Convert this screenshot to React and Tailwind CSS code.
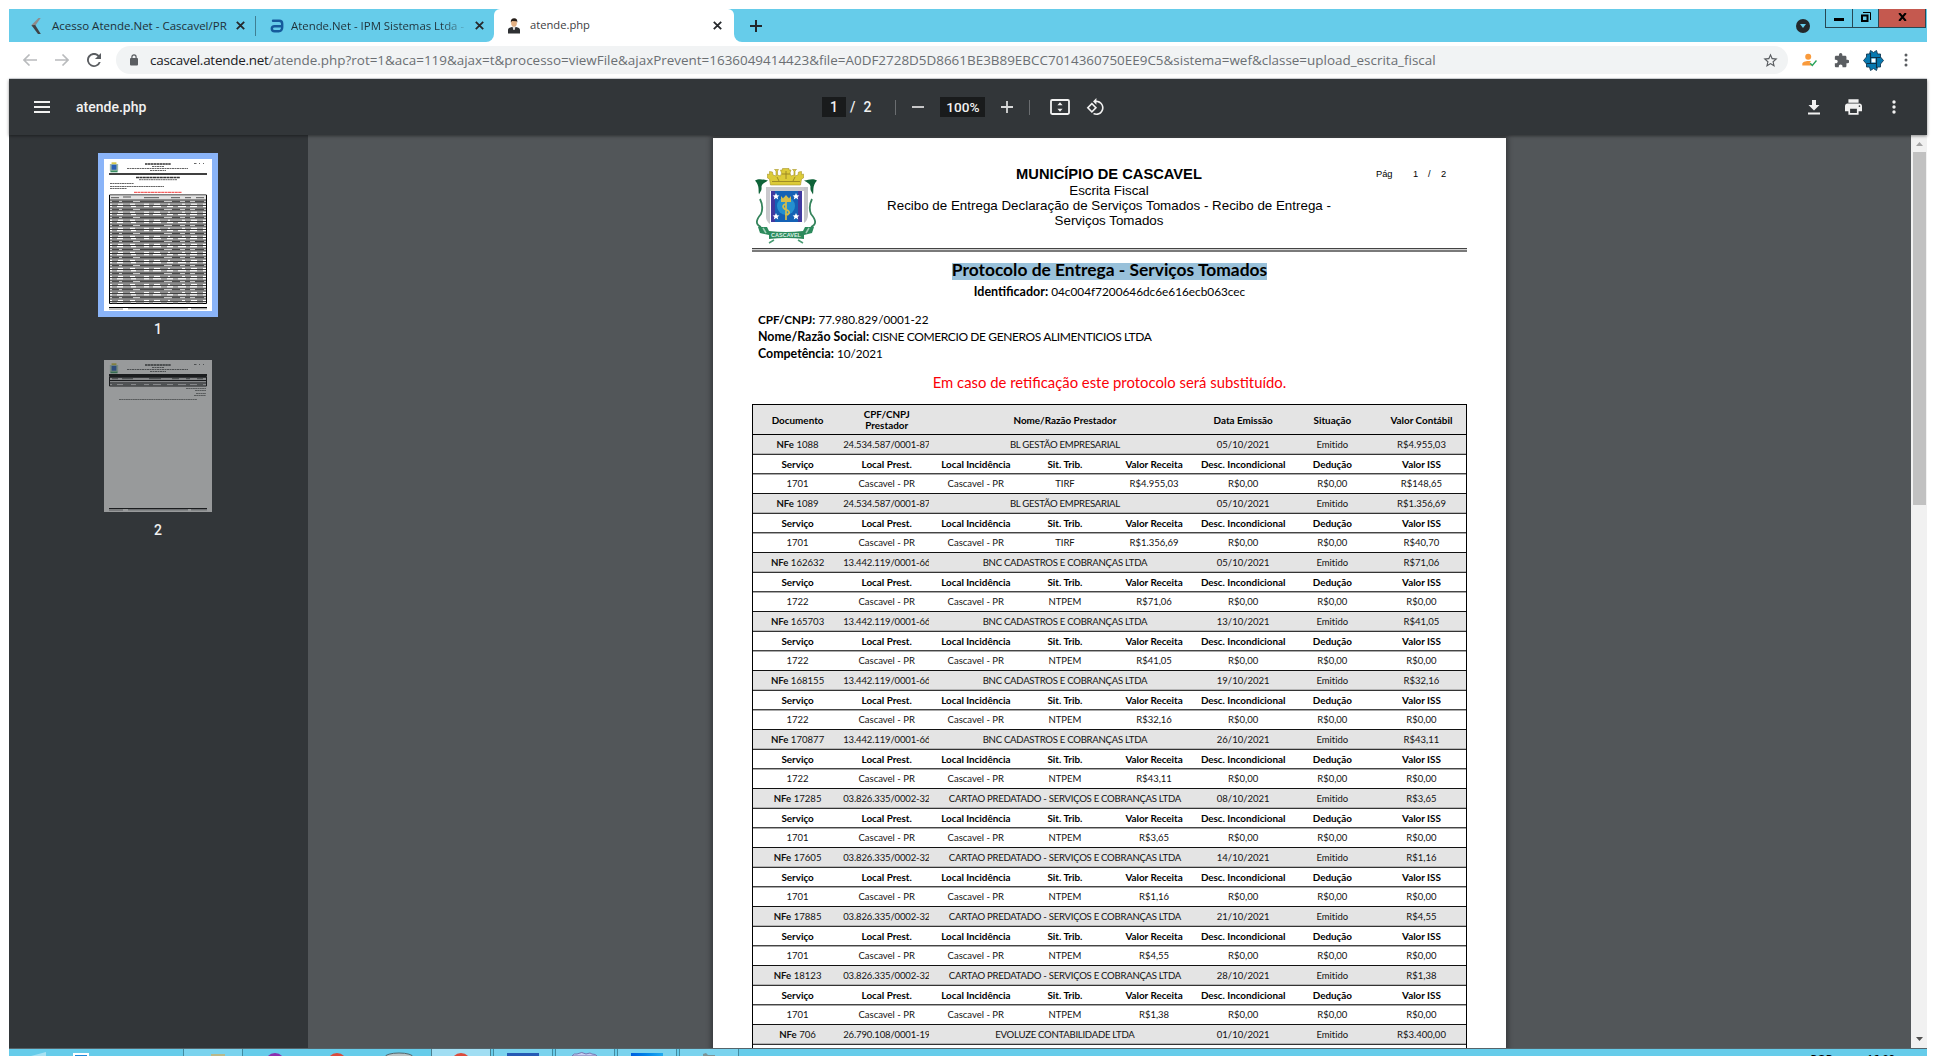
import React from 'react';

const RECORDS = [
  { nfe: '1088', cnpj: '24.534.587/0001-87', name: 'BL GESTÃO EMPRESARIAL', date: '05/10/2021', total: 'R$4.955,03', service: '1701', trib: 'TIRF', receita: 'R$4.955,03', iss: 'R$148,65' },
  { nfe: '1089', cnpj: '24.534.587/0001-87', name: 'BL GESTÃO EMPRESARIAL', date: '05/10/2021', total: 'R$1.356,69', service: '1701', trib: 'TIRF', receita: 'R$1.356,69', iss: 'R$40,70' },
  { nfe: '162632', cnpj: '13.442.119/0001-66', name: 'BNC CADASTROS E COBRANÇAS LTDA', date: '05/10/2021', total: 'R$71,06', service: '1722', trib: 'NTPEM', receita: 'R$71,06', iss: 'R$0,00' },
  { nfe: '165703', cnpj: '13.442.119/0001-66', name: 'BNC CADASTROS E COBRANÇAS LTDA', date: '13/10/2021', total: 'R$41,05', service: '1722', trib: 'NTPEM', receita: 'R$41,05', iss: 'R$0,00' },
  { nfe: '168155', cnpj: '13.442.119/0001-66', name: 'BNC CADASTROS E COBRANÇAS LTDA', date: '19/10/2021', total: 'R$32,16', service: '1722', trib: 'NTPEM', receita: 'R$32,16', iss: 'R$0,00' },
  { nfe: '170877', cnpj: '13.442.119/0001-66', name: 'BNC CADASTROS E COBRANÇAS LTDA', date: '26/10/2021', total: 'R$43,11', service: '1722', trib: 'NTPEM', receita: 'R$43,11', iss: 'R$0,00' },
  { nfe: '17285', cnpj: '03.826.335/0002-32', name: 'CARTAO PREDATADO - SERVIÇOS E COBRANÇAS LTDA', date: '08/10/2021', total: 'R$3,65', service: '1701', trib: 'NTPEM', receita: 'R$3,65', iss: 'R$0,00' },
  { nfe: '17605', cnpj: '03.826.335/0002-32', name: 'CARTAO PREDATADO - SERVIÇOS E COBRANÇAS LTDA', date: '14/10/2021', total: 'R$1,16', service: '1701', trib: 'NTPEM', receita: 'R$1,16', iss: 'R$0,00' },
  { nfe: '17885', cnpj: '03.826.335/0002-32', name: 'CARTAO PREDATADO - SERVIÇOS E COBRANÇAS LTDA', date: '21/10/2021', total: 'R$4,55', service: '1701', trib: 'NTPEM', receita: 'R$4,55', iss: 'R$0,00' },
  { nfe: '18123', cnpj: '03.826.335/0002-32', name: 'CARTAO PREDATADO - SERVIÇOS E COBRANÇAS LTDA', date: '28/10/2021', total: 'R$1,38', service: '1701', trib: 'NTPEM', receita: 'R$1,38', iss: 'R$0,00' },
  { nfe: '706', cnpj: '26.790.108/0001-19', name: 'EVOLUZE CONTABILIDADE LTDA', date: '01/10/2021', total: 'R$3.400,00' },
];

const SUB_HEADERS = ['Serviço', 'Local Prest.', 'Local Incidência', 'Sit. Trib.', 'Valor Receita', 'Desc. Incondicional', 'Dedução', 'Valor ISS'];

const CloseX = ({ className }) => (
  <svg viewBox="0 0 9 9" className={`h-[9px] w-[9px] shrink-0 ${className || ''}`} stroke="#26292c" strokeWidth="1.8"><path d="M.8.8l7.4 7.4M8.2.8L.8 8.2" /></svg>
);

function TabStrip() {
  return (
    <div className="flex h-[33px] shrink-0">
      <div className="flex w-[485px] items-center rounded-br-[8px] bg-[#66ccea] text-[#1f3038]">
        <svg viewBox="0 0 10 16" className="ml-[22px] h-4 w-[10px] shrink-0">
          <path d="M7.5 0h2.2L4 8 1 8.6.5 7z" fill="#8e8b8b" />
          <path d="M.5 7.2L4.2 7l5.6 9H7z" fill="#3f4347" />
        </svg>
        <span className="ml-[11px] w-[175px] shrink-0 whitespace-nowrap text-[11.5px]">Acesso Atende.Net - Cascavel/PR</span>
        <CloseX className="ml-[9px]" />
        <span className="ml-[10px] h-5 w-px shrink-0 bg-[#3f7f93]" />
        <svg viewBox="0 0 14 14" className="ml-[14px] h-[14px] w-[14px] shrink-0" fill="none" stroke="#165a9c" strokeWidth="2.4" strokeLinecap="round">
          <path d="M3 1.8h6.2c2 0 3 1 3 3v3.4c0 2.600-1.300 4-3.500 4H4.600c-1.700 0-2.800-.8-2.800-2.400S3 7.300 4.600 7.300H12" />
        </svg>
        <span className="ml-[7px] w-[175px] shrink-0 whitespace-nowrap bg-gradient-to-r from-[#1f3038] from-85% to-[#5fb9d4] bg-clip-text text-[11.4px] text-transparent">Atende.Net - IPM Sistemas Ltda -</span>
        <CloseX className="ml-[9px]" />
      </div>
      <div className="flex w-[240px] bg-[linear-gradient(#66ccea_8px,#ffffff_8px)]">
        <div className="flex w-full items-center rounded-t-[6px] bg-white">
          <svg viewBox="0 0 14 16" className="ml-[13px] h-4 w-[14px]">
            <path d="M1 15.500V12c0-1.600 1.500-2.500 4-3h4c2.500.5 4 1.400 4 3v3.500z" fill="#2e3033" />
            <path d="M5.200 8h3.600L7.600 12H6.400z" fill="#dedede" />
            <ellipse cx="7" cy="5" rx="2.900" ry="3.700" fill="#e2b083" />
            <path d="M3.800 4.500C3.600 1.500 5 .2 7.200.2s3.400 1.500 3.100 4.300L9.500 3.200 5 3z" fill="#261e19" />
          </svg>
          <span className="ml-[9px] flex-1 text-[11.200px] text-[#3c4043]">atende.php</span>
          <CloseX className="mr-[12px]" />
        </div>
      </div>
      <div className="flex flex-1 items-center rounded-bl-[8px] bg-[#66ccea]">
        <svg viewBox="0 0 12 12" className="ml-4 h-3 w-3" stroke="#22262a" strokeWidth="2"><path d="M6 0v12M0 6h12" /></svg>
        <svg viewBox="0 0 14 14" className="ml-auto h-[14px] w-[14px]"><circle cx="7" cy="7" r="7" fill="#23282b" /><path d="M4 5h6l-3 4z" fill="#66ccea" /></svg>
        <div className="ml-[15px] mr-px flex h-[19px] self-start border border-t-0 border-[#274753]">
          <div className="flex w-[27px] justify-center border-r border-[#274753] pt-[9px]"><span className="h-[3px] w-[10px] bg-black" /></div>
          <div className="flex w-[26px] justify-center border-r border-[#274753] pt-[3px]">
            <svg viewBox="0 0 10 10" className="h-[10px] w-[10px]" fill="none" stroke="#000"><path d="M1 3.500h5.500V9H1z" strokeWidth="2" /><path d="M2 .5h7.500V8" /></svg>
          </div>
          <div className="flex w-[46px] justify-center bg-[#c5594f] pt-1">
            <svg viewBox="0 0 9 8" className="h-2 w-[9px]" stroke="#000" strokeWidth="2"><path d="M1.200 0l6.600 8M7.800 0L1.200 8" /></svg>
          </div>
        </div>
      </div>
    </div>
  );
}

function AddressBar() {
  return (
    <div className="flex h-[37px] shrink-0 items-center border-b border-[#dadce0] bg-white pb-0">
      <svg viewBox="0 0 14 12" className="ml-[14px] h-3 w-[14px]" fill="none" stroke="#b9bbbd" strokeWidth="1.600"><path d="M14 6H1M6.500.5L1 6l5.500 5.500" /></svg>
      <svg viewBox="0 0 14 12" className="ml-[18px] h-3 w-[14px]" fill="none" stroke="#b9bbbd" strokeWidth="1.600"><path d="M0 6h13M7.500.5L13 6l-5.500 5.500" /></svg>
      <svg viewBox="0 0 14 14" className="ml-[18px] h-[14px] w-[14px]"><path d="M12 2A7 7 0 1 0 13.700 9H11.800A5.150 5.150 0 1 1 10.600 3.400L7.900 6.100H14V0z" fill="#5a5d61" /></svg>
      <div className="ml-[15px] flex h-7 w-[1672px] items-center rounded-full bg-[#f1f3f4]">
        <svg viewBox="0 0 8 12" className="ml-[14px] h-3 w-2"><rect y="4" width="8" height="7.500" rx="1" fill="#5a5d61" /><path d="M1.900 4.500V3a2.100 2.100 0 0 1 4.200 0v1.500" fill="none" stroke="#5a5d61" strokeWidth="1.200" /></svg>
        <span className="ml-[12px] flex-1 whitespace-nowrap text-[13.440px] text-[#6b6f73]"><span className="tracking-[-0.250px] text-[#202124]">cascavel.atende.net</span>/atende.php?rot=1&amp;aca=119&amp;ajax=t&amp;processo=viewFile&amp;ajaxPrevent=1636049414423&amp;file=A0DF2728D5D8661BE3B89EBCC7014360750EE9C5&amp;sistema=wef&amp;classe=upload_escrita_fiscal</span>
        <svg viewBox="0 0 24 24" className="mr-[9px] h-[17px] w-[17px]"><path fill="#5a5d61" d="M22 9.240l-7.190-.62L12 2 9.190 8.630 2 9.240l5.460 4.730L5.820 21 12 17.270 18.180 21l-1.630-7.030zM12 15.400l-3.760 2.270 1-4.280-3.320-2.880 4.380-.38L12 6.100l1.710 4.040 4.380.38-3.320 2.880 1 4.280z" /></svg>
      </div>
      <svg viewBox="0 0 15 14" className="ml-[14px] h-[14px] w-[15px]"><circle cx="6.200" cy="3.800" r="3" fill="#f99a3c" /><path d="M.3 12.500V11c0-2 3-3 6-3 1.200 0 2 .1 2.800.4L7.600 10l2 2.500z" fill="#f99a3c" /><path d="M8.200 10.300l2.100 2.200 4.200-5" fill="none" stroke="#27a35a" strokeWidth="1.400" /></svg>
      <svg viewBox="1 1 21.500 22" className="ml-[17px] h-[15px] w-[15px]"><path fill="#5a5d61" d="M20.500 11H19V7c0-1.100-.9-2-2-2h-4V3.500a2.500 2.500 0 0 0-5 0V5H4c-1.100 0-1.990.9-1.990 2v3.800H3.500c1.490 0 2.700 1.210 2.700 2.700s-1.210 2.700-2.700 2.700H2V20c0 1.100.9 2 2 2h3.800v-1.500c0-1.490 1.210-2.700 2.700-2.700s2.700 1.210 2.700 2.700V22H17c1.100 0 2-.9 2-2v-4h1.500a2.500 2.500 0 0 0 0-5z" /></svg>
      <svg viewBox="0 0 21 21" className="ml-[14px] h-[21px] w-[21px]">
        <path d="M7.500.5l3 2 3-2 1 3.500h3v3l3 3.500-3 3.500v3h-3l-1 3.500-3-2-3 2-1-3.500h-3v-3l-3-3.500 3-3.500V4h3z" fill="#0779b0" stroke="#123a55" strokeWidth=".9" />
        <path d="M7.500 3v10.500M3.500 13.500h9.500M13.500 18V7.500M17.500 7.500H8" fill="none" stroke="#0d3047" strokeWidth="1.100" />
        <path d="M8.500 8.500h4v4h-4z" fill="#fff" />
      </svg>
      <svg viewBox="0 0 4 14" className="ml-[20px] h-[14px] w-1" fill="#5a5d61"><circle cx="2" cy="2" r="1.500" /><circle cx="2" cy="7" r="1.500" /><circle cx="2" cy="12" r="1.500" /></svg>
    </div>
  );
}

function PdfToolbar() {
  return (
    <div className="relative z-10 flex h-14 shrink-0 items-center bg-[#323639] font-['Roboto'] text-[14px] font-medium text-[#f1f1f1] shadow-[0_1px_3px_rgba(0,0,0,0.45)]">
      <svg viewBox="0 0 16 12" className="ml-[25px] h-3 w-4" fill="#f1f1f1"><path d="M0 0h16v2H0zM0 5h16v2H0zM0 10h16v2H0z" /></svg>
      <span className="ml-[26px] w-[746px]">atende.php</span>
      <span className="flex h-5 w-6 items-center justify-center bg-[#191b1c]">1</span>
      <span className="ml-[4px]">/</span>
      <span className="ml-[8px]">2</span>
      <span className="ml-[24px] h-[15px] w-px bg-[#6a6d70]" />
      <svg viewBox="0 0 12 12" className="ml-[16px] h-3 w-3" stroke="#d8d9d9" strokeWidth="1.800"><path d="M0 6h12" /></svg>
      <span className="ml-[16px] flex h-5 w-[45px] items-center justify-center bg-[#191b1c] text-[13.6px]">100%</span>
      <svg viewBox="0 0 12 12" className="ml-[16px] h-3 w-3" stroke="#d8d9d9" strokeWidth="1.800"><path d="M0 6h12M6 0v12" /></svg>
      <span className="ml-[16px] h-[15px] w-px bg-[#6a6d70]" />
      <svg viewBox="0 0 20 16" className="ml-[20px] h-4 w-5"><rect x="1" y="1" width="18" height="14" rx="1.200" fill="none" stroke="#f1f1f1" strokeWidth="1.800" /><path d="M10 3.300l2.600 3H7.400zM10 12.700l2.600-3H7.400z" fill="#f1f1f1" /></svg>
      <svg viewBox="0 1 22.500 22" className="ml-[16px] h-[18px] w-[18px]"><path fill="#f1f1f1" d="M7.340 6.410L.86 12.900l6.490 6.480 6.490-6.480-6.500-6.490zM3.690 12.900l3.660-3.660L11 12.900l-3.660 3.660-3.650-3.660zm15.670-6.260C17.610 4.880 15.300 4 13 4V.76L8.760 5 13 9.240V6c1.790 0 3.580.68 4.950 2.050 2.730 2.730 2.730 7.170 0 9.900C16.580 19.320 14.790 20 13 20c-.97 0-1.940-.21-2.840-.61l-1.490 1.490C10.020 21.620 11.510 22 13 22c2.300 0 4.610-.88 6.360-2.640 3.520-3.510 3.520-9.210 0-12.720z" /></svg>
      <svg viewBox="0 0 14 17" className="ml-auto h-[17px] w-[14px]" fill="#f1f1f1"><path d="M5 1h4v5h3.500L7 11.500 1.500 6H5zM1 13.500h12v2H1z" /></svg>
      <svg viewBox="2 3 20 18" className="ml-[24px] h-4 w-[17px]"><path fill="#f1f1f1" d="M19 8H5c-1.660 0-3 1.340-3 3v6h4v4h12v-4h4v-6c0-1.660-1.340-3-3-3zm-3 11H8v-5h8v5zm3-7c-.55 0-1-.45-1-1s.45-1 1-1 1 .45 1 1-.45 1-1 1zm-1-9H6v4h12V3z" /></svg>
      <svg viewBox="0 0 4 14" className="ml-[30px] mr-[31px] h-[14px] w-1" fill="#f1f1f1"><circle cx="2" cy="2" r="1.700" /><circle cx="2" cy="7" r="1.700" /><circle cx="2" cy="12" r="1.700" /></svg>
    </div>
  );
}

function Crest({ className }) {
  return (
    <svg viewBox="0 0 62 77" className={className}>
      <path d="M15.500 17l-1-6-2-1V6l2 .5V3.500l3 .5.500 3 3 1V3l-1.500-1.500h4L22.500 3v4l3 1 1-3-1-3h2V.5h6.500V2h2l-1 3 1 3 3-1V3L37.500 1.500h4L40 3v5l3-1 .5-3 3-.5V6.500l2-.5v4l-2 1-1 6z" fill="#dccb38" stroke="#a8952a" strokeWidth=".6" />
      <path d="M17 13.500h28M22 9l2 4M40 9l-2 4M31 3v8M27 6h8" fill="none" stroke="#978522" strokeWidth=".9" />
      <path d="M0 12.500c4-2.500 8-1 13 0-3 2-6 3-6.500 6 .5 5-1.500 5-2.500 8-1-5 1-8-4-14zM62 12.500c-4-2.500-8-1-13 0 3 2 6 3 6.500 6-.5 5 1.500 5 2.500 8 1-5-1-8 4-14z" fill="#0f6339" />
      <path d="M5 31c3 6 3 10 1 15-5 6-6 10 0 13M57 31c-3 6-3 10-1 15 5 6 6 10 0 13" fill="none" stroke="#35845c" strokeWidth="1.800" />
      <path d="M11 19h42v32q-3 6-9 6H20q-9 0-9-6z" fill="#fff" />
      <path d="M11 19h42v4H11zM11 19h4v37q-4-3-4-7z" fill="#c9c9cd" />
      <path d="M53 19h-4v36q4-3 4-8z" fill="#c3c3c8" />
      <path d="M16 23h31v31H16z" fill="#41399f" />
      <path d="M20 23h23v31H20z" fill="#1461b5" />
      <circle cx="31" cy="38" r="9" fill="#2490cf" />
      <path d="M26 28l2 2.500 3-3.500 3 3.500 2-2.500v6H26z" fill="#d7bd49" />
      <path d="M31 36c-5 1-3 5 1 6 4 2 2 5-2 5M31 33v19" fill="none" stroke="#d7bd49" strokeWidth="1.700" />
      <path fill="#fff" d="M21 25l1 2.200 2.400.2-1.800 1.600.6 2.400-2.200-1.300-2.200 1.300.6-2.400-1.800-1.600 2.400-.2zM41 25l1 2.200 2.400.2-1.800 1.600.6 2.400-2.200-1.300-2.200 1.300.6-2.400-1.800-1.600 2.400-.2zM21 45l1 2.200 2.400.2-1.800 1.600.6 2.400-2.200-1.300-2.200 1.300.6-2.400-1.800-1.600 2.400-.2zM41 45l1 2.200 2.400.2-1.800 1.600.6 2.400-2.200-1.300-2.200 1.300.6-2.400-1.800-1.600 2.400-.2z" />
      <path d="M3 59l9 0 2 4q17 2 34 0l2-4 9 0-2 6-8 2v4q-18-2-35 0v-4l-9-2z" fill="#2c8a5c" />
      <path d="M8 60l3 5M54 60l-3 5" stroke="#9fcdb5" strokeWidth="1.500" />
      <path d="M14 75l5-3M48 75l-5-3" stroke="#4b9d75" strokeWidth="1.500" />
      <text x="31" y="69" textAnchor="middle" fontSize="5.500" fontWeight="700" fill="#dff1e7" fontFamily="Liberation Sans">CASCAVEL</text>
    </svg>
  );
}

const thumbRows = Array.from({ length: 13 }, (_, i) => 41 + i * 8.020);

function FirstPageArt() {
  return (
    <svg viewBox="0 0 108 152" className="h-[152px] w-[108px] bg-white">
      <svg x="5" y="3" width="10" height="11" viewBox="0 0 62 77"><path d="M14 2h34v14H14z" fill="#d6c84a" /><path d="M2 14h58v48H2z" fill="#9db8a9" /><path d="M14 20h34v34H14z" fill="#2a5fb5" /><path d="M6 60h50v12H6z" fill="#3a8e64" /></svg>
      <g stroke="#333" fill="none">
        <path d="M41 5h26" strokeWidth="1.600" strokeDasharray="2.500 .4" />
        <path d="M48 7.500h12M23 9.500h61M46 11.500h16M90 4.500h3M95 4.500h1M99 4.500h1" strokeWidth="1" strokeDasharray="2 .5" opacity=".75" />
        <path d="M32 18.500h44" strokeWidth="1.700" strokeDasharray="3 .4" />
        <path d="M35 20.700h38M6 24.500h24M6 27.500h54M6 29.500h17" strokeWidth="1" strokeDasharray="2 .4" opacity=".75" />
      </g>
      <path d="M5 15h98" stroke="#000" strokeWidth="1.400" />
      <path d="M30 33.300h48" stroke="#f23838" strokeWidth="1" strokeDasharray="3 .4" />
      <path d="M5.500 36h97v108.500h-97z" fill="#fff" stroke="#000" strokeWidth="1" />
      <path d="M6 36.500h96v4H6z" fill="#e2e2e2" />
      <path d="M7 38.700h8M19 38h8M40 38.700h15M67 38.700h9M81 38.700h6M92 38.700h8" stroke="#555" />
      {thumbRows.map((y) => (
        <g key={y}>
          <path d={`M6 ${y + 1.3}h96`} stroke="#c9c9c9" strokeWidth="2" />
          <path d={`M8 ${y + 1.400}h7M18 ${y + 1.400}h11M36 ${y + 1.400}h24M68 ${y + 1.400}h8M81 ${y + 1.400}h5M91 ${y + 1.400}h9`} stroke="#333" strokeWidth=".9" />
          <path d={`M6 ${y}h96M6 ${y + 2.800}h96M6 ${y + 5.400}h96`} stroke="#111" strokeWidth=".9" />
          <path d={`M8 ${y + 4.100}h6M19 ${y + 4.100}h7M31 ${y + 4.100}h9M45 ${y + 4.100}h5M56 ${y + 4.100}h8M66 ${y + 4.100}h12M81 ${y + 4.100}h6M93 ${y + 4.100}h6M8 ${y + 6.700}h5M19 ${y + 6.700}h8M32 ${y + 6.700}h8M45 ${y + 6.700}h4M57 ${y + 6.700}h6M69 ${y + 6.700}h5M82 ${y + 6.700}h4M93 ${y + 6.700}h6`} stroke="#555" strokeWidth=".8" />
        </g>
      ))}
      <path d="M5 148.500h98" stroke="#000" strokeWidth="1.200" />
      <path d="M5 150h14M24 149.800h60M87 149.800h16" stroke="#666" strokeWidth=".8" />
    </svg>
  );
}

function SecondPageArt() {
  return (
    <svg viewBox="0 0 108 152" className="h-[152px] w-[108px] bg-[#989a9b]">
      <svg x="5" y="3" width="10" height="11" viewBox="0 0 62 77"><path d="M14 2h34v14H14z" fill="#83803f" /><path d="M2 14h58v48H2z" fill="#758a80" /><path d="M14 20h34v34H14z" fill="#2d4c7c" /><path d="M6 60h50v12H6z" fill="#356a50" /></svg>
      <g stroke="#333739">
        <path d="M41 5h26" strokeWidth="1.600" strokeDasharray="2.500 .4" />
        <path d="M48 7.500h12M23 9.500h61M46 11.500h16M90 4.500h3M95 4.500h1M99 4.500h1" strokeWidth="1" strokeDasharray="2 .5" opacity=".75" />
      </g>
      <path d="M5 15h98" stroke="#1b1d1f" strokeWidth="2" />
      <path d="M5.500 16.500h97v9.500h-97z" fill="#86888a" stroke="#1b1d1f" />
      <path d="M6 17.200h96M6 20.500h96M6 23h96" stroke="#1b1d1f" strokeWidth="1.100" />
      <path d="M8 18.700h6M18 18.700h11M45 18.700h12M68 18.700h7M82 18.700h4M93 18.700h6M8 24.700h5M19 24.700h8M32 24.700h8M45 24.700h4M57 24.700h6M69 24.700h5M82 24.700h4M93 24.700h6" stroke="#3c3f41" strokeWidth=".9" />
      <path d="M82 28.500h20M91 30.500h11M92 33.500h10M90 35.500h12M15 39.500h78" stroke="#505355" strokeWidth=".9" strokeDasharray="2 .3" />
      <path d="M5 148.500h98" stroke="#1b1d1f" strokeWidth="1.200" />
      <path d="M5 150h14M24 149.800h60M87 149.800h16" stroke="#4a4d4f" strokeWidth=".8" />
    </svg>
  );
}

function Sidebar() {
  return (
    <div className="flex w-[299px] shrink-0 flex-col items-center bg-[#323639] pt-[18px] font-['Roboto'] text-[14px] font-medium leading-4 text-[#f1f1f1]">
      <div className="-ml-[1px] bg-[#8ab4f8] p-[6px]"><FirstPageArt /></div>
      <span className="-ml-px mt-[4px]">1</span>
      <div className="-ml-[1px] mt-[23px]"><SecondPageArt /></div>
      <span className="-ml-px mt-[10px]">2</span>
    </div>
  );
}

const Cell = ({ children, className }) => <div className={`overflow-hidden whitespace-nowrap text-center ${className || ''}`}>{children}</div>;

function RecordRows({ r }) {
  return (
    <>
      <div className="grid h-5 grid-cols-8 items-center border-b border-[#333] bg-[#e4e4e4] shadow-[inset_0_-1px_0_#b5b5b5]">
        <Cell className="text-[9.600px]"><b>NFe</b> {r.nfe}</Cell>
        <Cell className="ml-px mr-[2px] text-left text-[9.500px] tracking-[-0.130px]">{r.cnpj}</Cell>
        <Cell className="col-span-3 text-[9.600px] tracking-[-0.280px]">{r.name}</Cell>
        <Cell>{r.date}</Cell>
        <Cell>Emitido</Cell>
        <Cell>{r.total}</Cell>
      </div>
      {r.service && (
        <>
          <div className="grid h-[19px] grid-cols-8 items-center border-b border-[#444] text-[9.900px] font-bold text-black">
            {SUB_HEADERS.map((h) => <Cell key={h} className="-mt-px tracking-[-0.020px]">{h}</Cell>)}
          </div>
          <div className="grid h-5 grid-cols-8 items-center border-b border-[#111] shadow-[inset_0_1px_0_#aaa]">
            {[r.service, 'Cascavel - PR', 'Cascavel - PR', r.trib, r.receita, 'R$0,00', 'R$0,00', r.iss].map((v, i) => <Cell key={i}>{v}</Cell>)}
          </div>
        </>
      )}
    </>
  );
}

function DocumentPage() {
  return (
    <div className="mt-[3px] w-[793px] shrink-0 self-start bg-white px-[39px] font-['Lato'] text-black shadow-[0_0_5px_2px_rgba(0,0,0,0.35)]">
      <div className="flex h-[110px] font-['Liberation_Sans']">
        <Crest className="ml-[3px] mt-[30px] h-[77px] w-[62px] shrink-0" />
        <div className="ml-[57px] mt-[28px] w-[470px] text-center text-[13.360px] leading-[15px]">
          <div className="text-[14.700px] font-bold leading-[17px]">MUNICÍPIO DE CASCAVEL</div>
          <div>Escrita Fiscal</div>
          <div className="whitespace-nowrap">Recibo de Entrega Declaração de Serviços Tomados - Recibo de Entrega -</div>
          <div>Serviços Tomados</div>
        </div>
        <div className="ml-[32px] mt-[30px] flex h-3 text-[9.300px] leading-3">
          <span className="w-[37px]">Pág</span><span className="w-[15px]">1</span><span className="w-[13px]">/</span><span>2</span>
        </div>
      </div>
      <div className="h-1 border-b-2 border-t border-b-[#7a7a7a] border-t-[#444] bg-[#d0d0d0]" />
      <div className="mt-[11px] flex justify-center"><span className="h-[17px] whitespace-nowrap bg-[#99c1da] text-[17.400px] font-bold leading-[14.500px]">Protocolo de Entrega - Serviços Tomados</span></div>
      <div className="mt-[4px] text-center text-[11.800px] leading-4"><b className="text-[12.500px]">Identificador:</b> 04c004f7200646dc6e616ecb063cec</div>
      <div className="ml-[6px] mt-[11px] text-[11.700px] leading-[17px]">
        <div><b className="text-[11.700px]">CPF/CNPJ:</b> 77.980.829/0001-22</div>
        <div><b className="text-[12.400px]">Nome/Razão Social:</b> <span className="text-[12px] tracking-[-0.390px]">CISNE COMERCIO DE GENEROS ALIMENTICIOS LTDA</span></div>
        <div><b className="text-[12.400px]">Competência:</b> 10/2021</div>
      </div>
      <div className="mt-[10px] text-center text-[14.850px] leading-5 text-[#fb0007]">Em caso de retificação este protocolo será substituído.</div>
      <div className="mt-[12px] border border-b-0 border-black text-[9.500px] leading-[14px] text-[#111] [font-variant-ligatures:none]">
        <div className="grid h-[30px] grid-cols-8 items-center border-b border-black bg-[#e4e4e4] text-[9.900px] font-bold text-black">
          <Cell>Documento</Cell>
          <Cell className="leading-[11px]">CPF/CNPJ<br />Prestador</Cell>
          <Cell className="col-span-3">Nome/Razão Prestador</Cell>
          <Cell>Data Emissão</Cell>
          <Cell>Situação</Cell>
          <Cell>Valor Contábil</Cell>
        </div>
        {RECORDS.map((r) => <RecordRows key={r.nfe} r={r} />)}
        <div className="h-5" />
      </div>
    </div>
  );
}

function Taskbar() {
  return (
    <div className="flex h-2 shrink-0 items-stretch overflow-hidden border-t border-[#55646a] bg-[#66ccea]">
      <svg viewBox="0 0 15 7" className="ml-[22px] h-[7px] w-[15px]"><path d="M0 7l15-4v4z" fill="#a8e2f3" /></svg>
      <span className="ml-[27px] mt-[4px] w-4 border-2 border-b-0 border-white bg-[#1e88d8]" />
      <div className="ml-[94px] flex w-[60px] justify-center border-x border-[#438ba0] bg-[#7ad3ee]"><span className="mr-[-10px] mt-[5px] h-1 w-[14px] bg-[#b9b98a]" /></div>
      <svg viewBox="0 0 20 7" className="ml-[22px] h-[7px] w-5"><circle cx="10" cy="14" r="10" fill="#8b2fb0" /></svg>
      <svg viewBox="0 0 20 7" className="ml-[42px] h-[7px] w-5"><circle cx="10" cy="14" r="10" fill="#db4b3c" /></svg>
      <svg viewBox="0 0 30 7" className="ml-[37px] h-[7px] w-[30px]"><ellipse cx="15" cy="8" rx="14" ry="4" fill="#b9c4c6" stroke="#52666c" /></svg>
      <div className="ml-[17px] flex w-[60px] justify-center border-x border-[#4b7f8f] bg-[#a1def3]"><svg viewBox="0 0 20 7" className="h-[7px] w-5"><circle cx="10" cy="14" r="10" fill="#db4b3c" /></svg></div>
      <div className="ml-[2px] flex w-[60px] justify-center border-x border-[#438ba0] bg-[#7ad3ee] pt-[4px]"><span className="w-8 bg-[#265bb5]" /></div>
      <div className="ml-[2px] flex w-[60px] justify-center border-x border-[#438ba0] bg-[#7ad3ee]"><svg viewBox="0 0 28 7" className="h-[7px] w-7"><path d="M1 7q2-3 5-2 5-3 9 0 5-2 6 0 4 0 5 2z" fill="#c7cdf0" stroke="#7478b3" /></svg></div>
      <div className="ml-[2px] flex w-[60px] justify-center border-x border-[#438ba0] bg-[#7ad3ee] pt-[4px]"><span className="w-8 bg-gradient-to-r from-[#005fe0] to-[#20aaf0]" /></div>
      <div className="ml-[2px] flex w-[60px] justify-center border-x border-[#438ba0] bg-[#7ad3ee]"><svg viewBox="0 0 14 7" className="h-[7px] w-[14px]"><path d="M1 7V5l3-1 2 2h7v1z" fill="#7b9598" /></svg></div>
      <span className="ml-auto mt-[3px] text-[11px] font-semibold leading-[13px] text-black">POR</span>
      <span className="ml-[34px] mr-[32px] mt-[3px] text-[11px] font-semibold leading-[13px] text-black">16:09</span>
    </div>
  );
}

export default function App() {
  return (
    <div className="h-[1056px] w-[1936px] overflow-hidden bg-white px-[9px] pt-[9px] font-['Open_Sans',sans-serif]">
      <div className="flex h-[1047px] flex-col">
        <TabStrip />
        <AddressBar />
        <PdfToolbar />
        <div className="flex h-[913px] shrink-0 overflow-hidden bg-[#525659]">
          <Sidebar />
          <div className="flex flex-1 justify-center overflow-hidden"><DocumentPage /></div>
          <div className="flex w-4 shrink-0 flex-col items-center bg-[#f1f1f1]">
            <svg viewBox="0 0 7 4" className="mt-[7px] h-1 w-[7px]"><path d="M0 4l3.500-4L7 4z" fill="#a3a3a3" /></svg>
            <span className="mt-[6px] h-[353px] w-[13px] bg-[#c1c1c1]" />
            <svg viewBox="0 0 7 4" className="mb-[7px] mt-auto h-1 w-[7px]"><path d="M0 0l3.500 4L7 0z" fill="#505050" /></svg>
          </div>
        </div>
        <Taskbar />
      </div>
    </div>
  );
}
